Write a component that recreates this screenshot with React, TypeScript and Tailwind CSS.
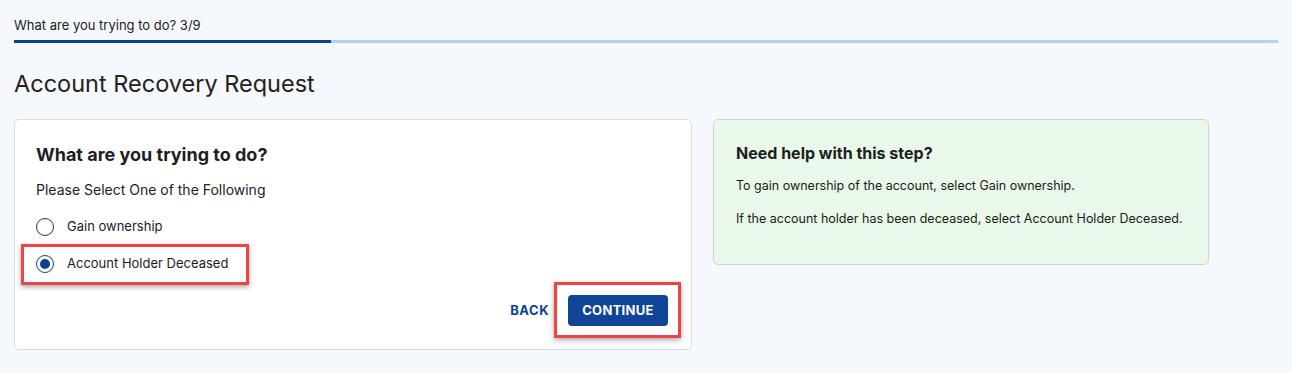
import React from "react";

export default function App() {
  return (
    <div className="min-h-screen w-full bg-[#f5f8fc] px-[14px] pt-[15px] font-['Inter',sans-serif] text-[#1b1b1b]">
      <div className="text-[13px] leading-[20px]">What are you trying to do? 3/9</div>
      <div className="mt-[5px] flex h-[3px] w-full bg-[#b5d0f5]">
        <div className="h-full w-[317px] bg-[#0b3f93]" />
      </div>
      <h1 className="mt-[25px] text-[23.5px] leading-[32px] font-normal text-[#222]">Account Recovery Request</h1>
      <div className="mt-[19px] flex items-start gap-[21px]">
        <div className="h-[231px] w-[678px] rounded-[5px] border border-[#d9dde3] bg-white px-[21px] pt-[23px]">
          <div className="text-[18px] leading-[24px] font-bold text-[#1e1e1e]">What are you trying to do?</div>
          <div className="mt-[13px] text-[14px] leading-[20px] text-[#222]">Please Select One of the Following</div>
          <div className="mt-[17px] flex h-[20px] items-center gap-[13px] text-[13px]">
            <span className="h-[18px] w-[18px] rounded-full border border-[#333] bg-white" />
            <span>Gain ownership</span>
          </div>
          <div className="relative mt-[17px] flex h-[20px] items-center gap-[13px] text-[13px]">
            <span className="flex h-[18px] w-[18px] items-center justify-center rounded-full border border-[#0d3f94] bg-white">
              <span className="h-[10px] w-[10px] rounded-full bg-[#0d3f94]" />
            </span>
            <span>Account Holder Deceased</span>
            <div className="pointer-events-none absolute left-[-15px] top-[-10px] h-[41px] w-[228px] border-[3px] border-[#ef4444] shadow-[0_2px_5px_rgba(0,0,0,0.35)]" />
          </div>
          <div className="mt-[21px] flex items-center justify-end gap-[19px] pr-[2px]">
            <span className="text-[13px] font-bold tracking-[0.5px] text-[#0d3f94]">BACK</span>
            <div className="relative">
              <button className="h-[31px] w-[100px] rounded-[4px] bg-[#0f4496] text-[13px] font-bold tracking-[0.3px] text-white">CONTINUE</button>
              <div className="pointer-events-none absolute left-[-14px] top-[-13px] h-[56px] w-[127px] border-[3px] border-[#ef4444] shadow-[0_2px_5px_rgba(0,0,0,0.35)]" />
            </div>
          </div>
        </div>
        <div className="h-[146px] w-[496px] rounded-[5px] border border-[#cfd6cf] bg-[#eaf8ea] px-[22px] pt-[22px]">
          <div className="text-[16px] leading-[22px] font-bold text-[#1e1e1e]">Need help with this step?</div>
          <div className="mt-[13px] text-[12.5px] leading-[18px]">To gain ownership of the account, select Gain ownership.</div>
          <div className="mt-[15px] text-[12.5px] leading-[18px]">If the account holder has been deceased, select Account Holder Deceased.</div>
        </div>
      </div>
    </div>
  );
}
